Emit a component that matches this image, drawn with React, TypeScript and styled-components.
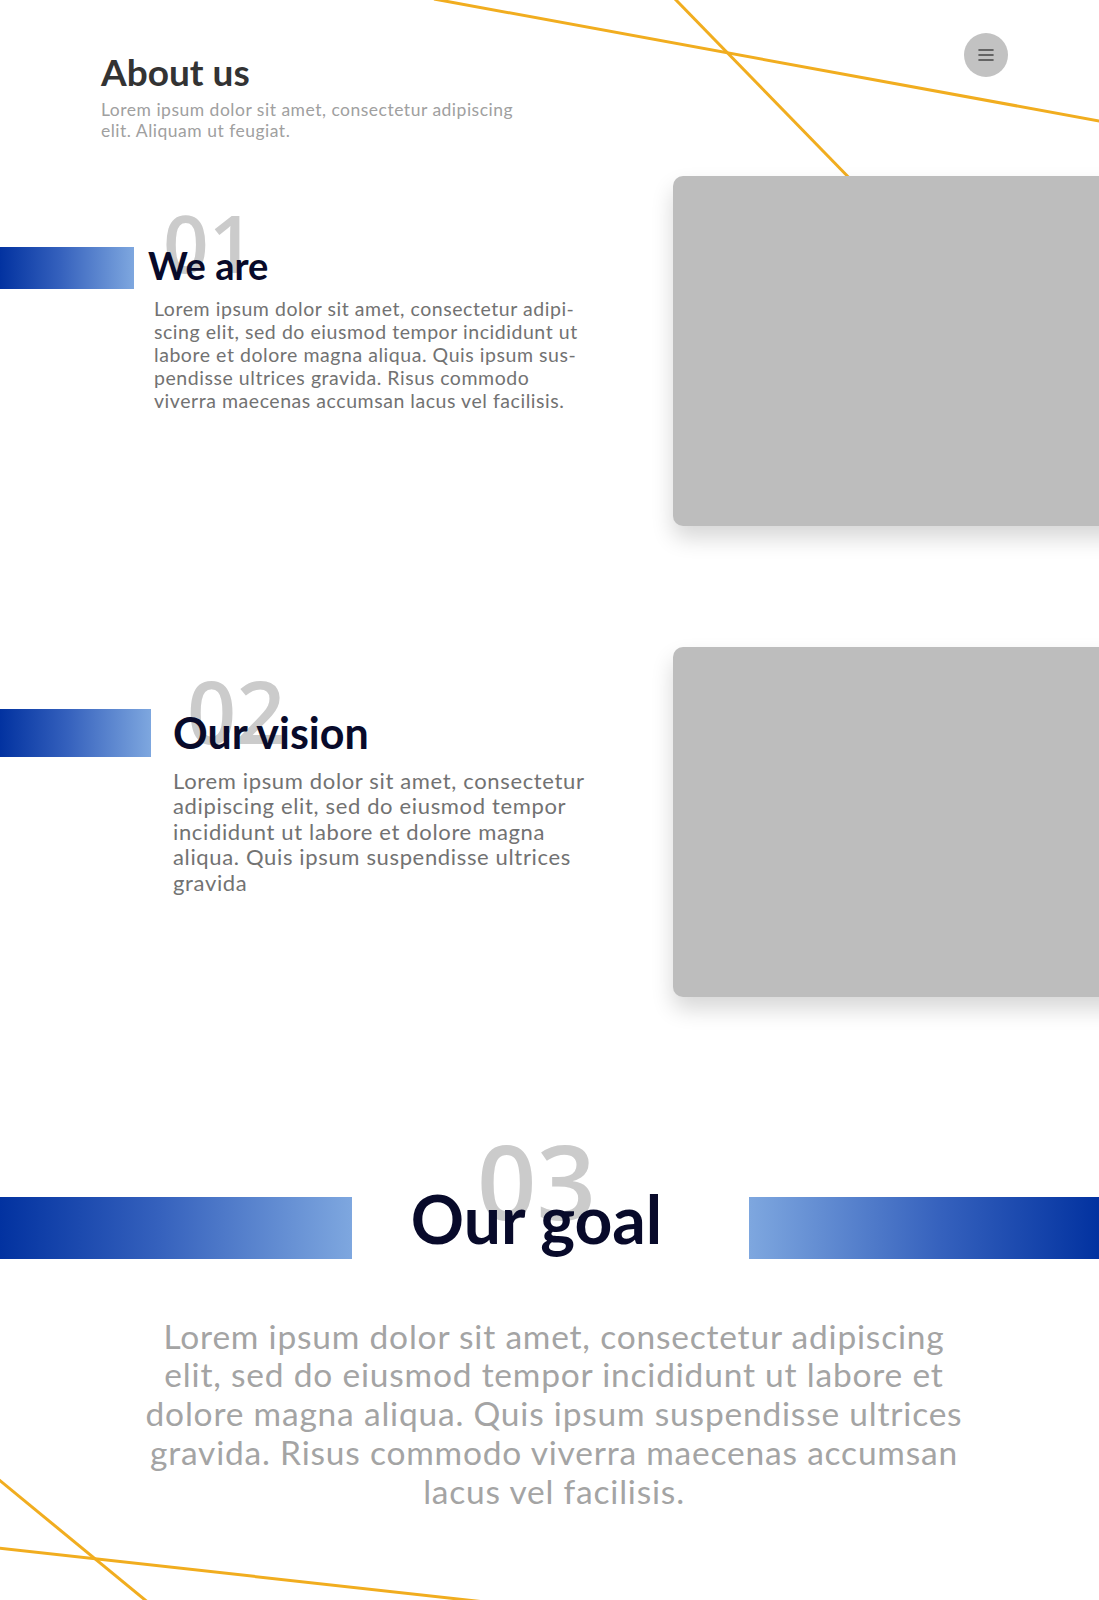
import React from "react";
import styled, { createGlobalStyle } from "styled-components";

const GlobalStyle = createGlobalStyle`
  html, body {
    margin: 0;
    padding: 0;
    background: #fff;
  }
  body {
    font-family: Lato, "Liberation Sans", sans-serif;
  }
`;

const Page = styled.div`
  position: relative;
  width: 100%;
  height: 1600px;
  overflow: hidden;
  background: #fff;
`;

const Decor = styled.svg`
  position: absolute;
  top: 0;
  left: 0;
  width: 1099px;
  height: 1600px;
  pointer-events: none;
  z-index: 0;
`;

const Content = styled.div`
  position: relative;
  z-index: 1;
`;

const Header = styled.header`
  display: flex;
  justify-content: space-between;
  align-items: flex-start;
  height: 176px;
  box-sizing: border-box;
  padding: 33px 91px 0 101px;
`;

const TitleBlock = styled.div`
  padding-top: 17px;
`;

const Title = styled.h1`
  margin: 0;
  font-size: 37px;
  line-height: 44px;
  font-weight: 700;
  color: #333333;
`;

const Subtitle = styled.p`
  margin: 5px 0 0;
  font-size: 17.5px;
  line-height: 21px;
  letter-spacing: 0.5px;
  color: #a0a0a0;
`;

const MenuButton = styled.button`
  width: 44px;
  height: 44px;
  border: none;
  border-radius: 50%;
  background: #c2c2c2;
  display: flex;
  align-items: center;
  justify-content: center;
  padding: 0;
  cursor: pointer;
`;

const Row = styled.section<{ $gap: number }>`
  display: flex;
  justify-content: space-between;
  margin-top: ${(p) => p.$gap}px;
`;

const TextCol = styled.div<{ $top: number }>`
  flex: 0 0 673px;
  padding-top: ${(p) => p.$top}px;
`;

const Card = styled.div`
  flex: 0 0 480px;
  height: 350px;
  background: #bdbdbd;
  border-radius: 10px 0 0 10px;
  box-shadow: 0 12px 22px rgba(0, 0, 0, 0.16);
`;

const HeadingRow = styled.div<{ $gap: number }>`
  display: flex;
  align-items: center;
  gap: ${(p) => p.$gap}px;
`;

const Bar = styled.div<{ $w: number; $h: number; $reverse?: boolean }>`
  flex: 0 0 ${(p) => p.$w}px;
  height: ${(p) => p.$h}px;
  background: linear-gradient(
    ${(p) => (p.$reverse ? "to left" : "to right")},
    #0232a0 0%,
    #3561bd 45%,
    #7ea7df 100%
  );
`;

const Heading = styled.h2<{ $size: number; $lift: number }>`
  position: relative;
  margin: 0 0 ${(p) => p.$lift}px;
  font-size: ${(p) => p.$size}px;
  line-height: ${(p) => Math.round(p.$size * 1.2)}px;
  font-weight: 700;
  color: #080a2a;
  white-space: nowrap;
`;

const HeadingText = styled.span`
  position: relative;
  z-index: 1;
`;

const Number = styled.span<{ $size: number; $top: number; $left: number }>`
  position: absolute;
  top: ${(p) => p.$top}px;
  left: ${(p) => p.$left}px;
  font-family: "Open Sans", "Noto Sans", sans-serif;
  font-weight: 600;
  font-size: ${(p) => p.$size}px;
  line-height: 1;
  color: #cbcbcb;
  z-index: 0;
`;

const Body = styled.p<{
  $size: number;
  $lh: number;
  $ls: number;
  $indent: number;
  $top: number;
}>`
  margin: ${(p) => p.$top}px 0 0 ${(p) => p.$indent}px;
  font-size: ${(p) => p.$size}px;
  line-height: ${(p) => p.$lh}px;
  letter-spacing: ${(p) => p.$ls}px;
  color: #727272;
`;

const Line = styled.span`
  display: block;
  white-space: nowrap;
`;

const GoalHead = styled.div`
  display: flex;
  align-items: flex-start;
  margin-top: 200px;
`;

const GoalCenter = styled.div`
  flex: 1;
  display: flex;
  justify-content: center;
  padding-right: 28px;
`;

const GoalHeading = styled.h2`
  position: relative;
  margin: -11.5px 0 0;
  font-size: 66px;
  line-height: 66px;
  font-weight: 700;
  color: #080a2a;
  white-space: nowrap;
`;

const GoalNumber = styled.span`
  position: absolute;
  top: -58px;
  left: 50%;
  transform: translateX(-50%);
  font-family: "Open Sans", "Noto Sans", sans-serif;
  font-weight: 600;
  font-size: 104px;
  line-height: 1;
  color: #cbcbcb;
`;

const GoalText = styled.p`
  margin: 57.5px 0 0;
  padding-left: 9px;
  text-align: center;
  font-size: 33.5px;
  line-height: 38.8px;
  letter-spacing: 0.8px;
  color: #a4a4a4;
`;

const MenuIcon = () => (
  <svg width="16" height="12" viewBox="0 0 16 12">
    <g stroke="#454545" strokeWidth="1.6" strokeLinecap="round">
      <line x1="1" y1="1" x2="15" y2="1" />
      <line x1="1" y1="6" x2="15" y2="6" />
      <line x1="1" y1="11" x2="15" y2="11" />
    </g>
  </svg>
);

type Section = {
  num: string;
  title: string;
  lines: string[];
  rowGap: number;
  top: number;
  bar: [number, number];
  gap: number;
  size: number;
  lift: number;
  numSize: number;
  numTop: number;
  numLeft: number;
  bodySize: number;
  bodyLh: number;
  bodyLs: number;
  indent: number;
  bodyTop: number;
};

const sections: Section[] = [
  {
    num: "01",
    title: "We are",
    lines: [
      "Lorem ipsum dolor sit amet, consectetur adipi-",
      "scing elit, sed do eiusmod tempor incididunt ut",
      "labore et dolore magna aliqua. Quis ipsum sus-",
      "pendisse ultrices gravida. Risus commodo",
      "viverra maecenas accumsan lacus vel facilisis.",
    ],
    rowGap: 0,
    top: 66,
    bar: [134, 42],
    gap: 14,
    size: 38,
    lift: 6,
    numSize: 80,
    numTop: -40,
    numLeft: 15,
    bodySize: 19.5,
    bodyLh: 23,
    bodyLs: 0.55,
    indent: 6,
    bodyTop: 3,
  },
  {
    num: "02",
    title: "Our vision",
    lines: [
      "Lorem ipsum dolor sit amet, consectetur",
      "adipiscing elit, sed do eiusmod tempor",
      "incididunt ut labore et dolore magna",
      "aliqua. Quis ipsum suspendisse ultrices",
      "gravida",
    ],
    rowGap: 121,
    top: 60,
    bar: [151, 48],
    gap: 22,
    size: 43,
    lift: 0,
    numSize: 86,
    numTop: -39,
    numLeft: 14,
    bodySize: 22,
    bodyLh: 25.5,
    bodyLs: 0.65,
    indent: 0,
    bodyTop: 8.5,
  },
];

const goalLines = [
  "Lorem ipsum dolor sit amet, consectetur adipiscing",
  "elit, sed do eiusmod tempor incididunt ut labore et",
  "dolore magna aliqua. Quis ipsum suspendisse ultrices",
  "gravida. Risus commodo viverra maecenas accumsan",
  "lacus vel facilisis.",
];

const App = () => {
  return (
    <Page>
      <GlobalStyle />
      <Decor viewBox="0 0 1099 1600">
        <g stroke="#f1ad1f" strokeWidth="3" fill="none">
          <line x1="434" y1="-1" x2="1110" y2="123" />
          <line x1="675" y1="-1" x2="860" y2="189" />
          <line x1="-2" y1="1479" x2="150" y2="1604" />
          <line x1="-2" y1="1548" x2="485" y2="1602" />
        </g>
      </Decor>
      <Content>
        <Header>
          <TitleBlock>
            <Title>About us</Title>
            <Subtitle>
              Lorem ipsum dolor sit amet, consectetur adipiscing
              <br />
              elit. Aliquam ut feugiat.
            </Subtitle>
          </TitleBlock>
          <MenuButton aria-label="Menu">
            <MenuIcon />
          </MenuButton>
        </Header>

        {sections.map((s) => (
          <Row key={s.num} $gap={s.rowGap}>
            <TextCol $top={s.top}>
              <HeadingRow $gap={s.gap}>
                <Bar $w={s.bar[0]} $h={s.bar[1]} />
                <Heading $size={s.size} $lift={s.lift}>
                  <Number $size={s.numSize} $top={s.numTop} $left={s.numLeft}>
                    {s.num}
                  </Number>
                  <HeadingText>{s.title}</HeadingText>
                </Heading>
              </HeadingRow>
              <Body
                $size={s.bodySize}
                $lh={s.bodyLh}
                $ls={s.bodyLs}
                $indent={s.bar[0] + s.gap + s.indent}
                $top={s.bodyTop}
              >
                {s.lines.map((l) => (
                  <Line key={l}>{l}</Line>
                ))}
              </Body>
            </TextCol>
            <Card />
          </Row>
        ))}

        <GoalHead>
          <Bar $w={352} $h={62} />
          <GoalCenter>
            <GoalHeading>
              <GoalNumber>03</GoalNumber>
              <HeadingText>Our goal</HeadingText>
            </GoalHeading>
          </GoalCenter>
          <Bar $w={350} $h={62} $reverse />
        </GoalHead>
        <GoalText>
          {goalLines.map((l) => (
            <Line key={l}>{l}</Line>
          ))}
        </GoalText>
      </Content>
    </Page>
  );
};

export default App;
